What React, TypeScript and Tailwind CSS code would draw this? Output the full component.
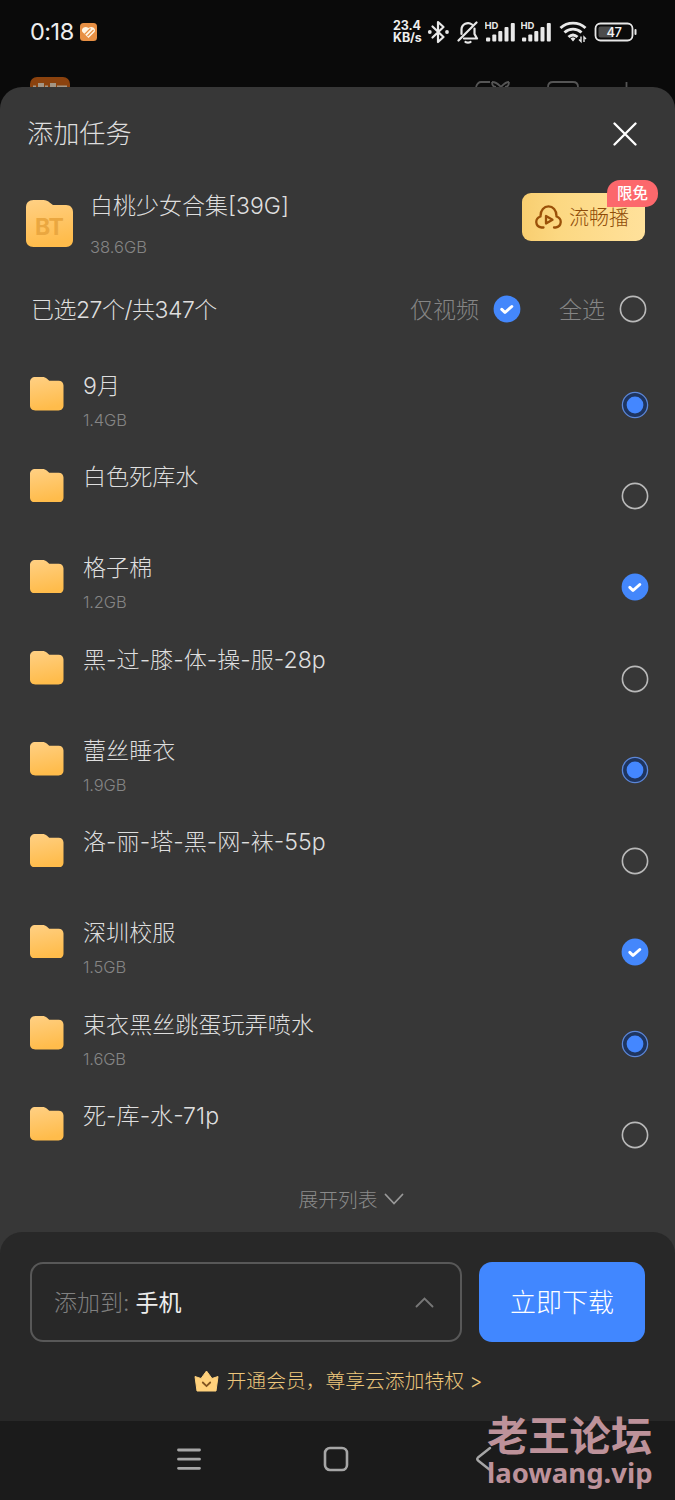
import { useState } from 'react';

type CheckState = 'none' | 'partial' | 'checked';

interface FolderItem {
  name: string;
  size?: string;
  state: CheckState;
}

const folders: FolderItem[] = [
  { name: '9月', size: '1.4GB', state: 'partial' },
  { name: '白色死库水', state: 'none' },
  { name: '格子棉', size: '1.2GB', state: 'checked' },
  { name: '黑-过-膝-体-操-服-28p', state: 'none' },
  { name: '蕾丝睡衣', size: '1.9GB', state: 'partial' },
  { name: '洛-丽-塔-黑-网-袜-55p', state: 'none' },
  { name: '深圳校服', size: '1.5GB', state: 'checked' },
  { name: '束衣黑丝跳蛋玩弄喷水', size: '1.6GB', state: 'partial' },
  { name: '死-库-水-71p', state: 'none' },
];

function CheckCircle({ state }: { state: CheckState }) {
  return (
    <svg className="block shrink-0" width="28" height="28" viewBox="0 0 28 28" fill="none">
      {state === 'none' && <circle cx="14" cy="14" r="12.6" stroke="#b9b9b9" strokeWidth="1.6" />}
      {state === 'partial' && (
        <>
          <circle cx="14" cy="14" r="12.6" fill="#1f355f" stroke="#5b86d8" strokeWidth="1.3" />
          <circle cx="14" cy="14" r="8.4" fill="#4487ff" />
        </>
      )}
      {state === 'checked' && (
        <>
          <circle cx="14" cy="14" r="13.4" fill="#4487fb" />
          <path d="M8.8 14.4l3.200 3.100 6.800-6" stroke="#fff" strokeWidth="3" strokeLinecap="round" strokeLinejoin="round" />
        </>
      )}
    </svg>
  );
}

function FolderIcon({ className }: { className: string }) {
  return (
    <svg className={className} viewBox="0 0 34 34">
      <defs>
        <linearGradient id="folder" x1="0" y1="0" x2="0.2" y2="1">
          <stop offset="0" stopColor="#ffd084" />
          <stop offset="1" stopColor="#ffbc4b" />
        </linearGradient>
      </defs>
      <path
        d="M5.500 0H12.500c2 0 3.400.600 4.800 1.900L19.500 3.700H29c3 0 5 2 5 5V29c0 3-2 5-5 5H5.500C2 34 0 32 0 29V5.500C0 2 2 0 5.500 0z"
        fill="url(#folder)"
      />
    </svg>
  );
}

function SignalIcon() {
  return (
    <svg className="block" width="31" height="22" viewBox="0 0 31 22" fill="#e8e8e8">
      <text x="-0.500" y="8" fontSize="9.500" fontWeight="700" fontFamily="Inter, sans-serif">HD</text>
      <rect x="1" y="16.500" width="4.200" height="4" rx="1" />
      <rect x="7.300" y="13.500" width="4" height="7" rx="1" />
      <rect x="13.300" y="10" width="4" height="10.500" rx="1" />
      <rect x="19.500" y="6" width="4" height="14.500" rx="1" />
      <rect x="25.800" y="2" width="4" height="18.500" rx="1" />
    </svg>
  );
}

function StatusBar() {
  return (
    <div className="flex h-[64px] items-center pl-[30px] pr-[38px] text-[#eee]">
      <span className="w-[50px] whitespace-nowrap text-[23.5px] font-normal leading-none tracking-[-0.5px]">0:18</span>
      <svg width="17" height="18" viewBox="0 0 17 18">
        <rect width="17" height="18" rx="3.500" fill="#e89044" />
        <path d="M8.500 15L2.500 9C.5 6 4.500 2 8.500 5 12.500 2 16.500 6 14.500 9z" fill="#fff4e2" />
        <path d="M4.500 11.500l6-6M7.500 13l6-6" stroke="#e89044" strokeWidth="1.200" />
      </svg>

      <div className="ml-auto flex items-center">
        <div className="w-[34px] whitespace-nowrap text-[12.500px] font-bold leading-[12px] tracking-[-0.1px]">
          <div>23.4</div>
          <div>KB/s</div>
        </div>
        <svg width="23" height="24" viewBox="0 0 23 24" fill="none" stroke="#e8e8e8" strokeWidth="2.200">
          <path d="M5.500 6.500l11 10.500-5.500 5V2l5.500 5L5.500 17.500" strokeLinejoin="round" strokeLinecap="round" />
          <circle cx="2.800" cy="12" r="1.900" fill="#e8e8e8" stroke="none" />
          <circle cx="20" cy="12" r="1.900" fill="#e8e8e8" stroke="none" />
        </svg>
        <svg className="ml-[7px]" width="22" height="24" viewBox="0 0 22 24" fill="none" stroke="#e8e8e8" strokeWidth="2.200" strokeLinecap="round" strokeLinejoin="round">
          <path d="M4.500 14V9.500a6.500 6.500 0 0 1 10.500-5M17.500 8.500V14l2.500 4.500H7M1.500 20.500L19.500 2.500" />
          <path d="M8.500 22c1.500.8 3.500.8 5 0" />
        </svg>
        <div className="ml-[6px] flex gap-[5px]">
          <SignalIcon />
          <SignalIcon />
        </div>
        <svg className="ml-[7px]" width="30" height="24" viewBox="0 0 30 24" fill="none" stroke="#e8e8e8" strokeWidth="2.900">
          <path d="M1.500 8c7-6.500 18-6.500 25 0M5.500 12.500c5-4.500 12-4.500 17 0M9.500 17c3-2.800 6-2.800 9 0" />
          <path d="M11.500 18.500c1-1.500 4-1.500 5 0L14 21.500z" fill="#e8e8e8" stroke="none" />
          <path d="M22 16.500v5l-2-2M25 22v-5l2 2" strokeWidth="1.400" />
        </svg>
        <svg className="ml-[5px]" width="43" height="20" viewBox="0 0 43 20" fill="none">
          <rect x="1.500" y="1.500" width="37" height="17" rx="5" stroke="#e8e8e8" strokeWidth="1.800" />
          <rect x="4.500" y="4.500" width="15" height="11" rx="2" fill="#4c4c4c" />
          <rect x="40.500" y="7" width="2" height="6" rx="1" fill="#e8e8e8" />
          <text x="20" y="14.700" textAnchor="middle" fontSize="13" fontFamily="Inter, sans-serif" fontWeight="500" letterSpacing="-0.500" fill="#f2f2f2">47</text>
        </svg>
      </div>
    </div>
  );
}

// Top of the home screen that shows above the sheet
function BackgroundBar() {
  return (
    <div className="flex h-[23px] items-end justify-between pl-[30px] pr-[44px]">
      <svg width="40" height="10" viewBox="0 0 40 10">
        <path d="M0 10V7a7 7 0 0 1 7-7h26a7 7 0 0 1 7 7v3z" fill="#8b420e" />
        <path d="M8 6h6v4H8zM20 6h6v4h-6zM3 8.500h3V10H3zM15 8.500h3V10h-3zM27 8.500h10V10H27z" fill="#a39584" />
      </svg>
      <svg width="156" height="6" viewBox="0 0 156 6" fill="none" stroke="#555" strokeWidth="1.800">
        <path d="M1 6c1-3 2-5 5-5h9M17 1c5 0 7 3 9 5 2-2 4-5 8-5M17 1c0 3 1 5 4 5M34 1c0 3-1 5-4 5M73 6c0-4 2-5 5-5h20c3 0 5 1 5 5M151.500 1v5" />
      </svg>
    </div>
  );
}

function FolderRow({ item, onToggle }: { item: FolderItem; onToggle: () => void }) {
  return (
    <div className="flex h-[91.25px] items-start pl-[30px] pr-[26px]">
      <FolderIcon className="mt-[17.5px] h-[33.500px] w-[33.500px] shrink-0" />
      <div className="ml-[19.500px] flex-1">
        <div className="mt-[11px] whitespace-nowrap text-[23.1px] leading-[30px] text-[#dedede]">{item.name}</div>
        {item.size && <div className="mt-[9px] text-[16.500px] leading-5 tracking-[-0.15px] text-[#858585]">{item.size}</div>}
      </div>
      <button className="mt-[31px]" onClick={onToggle}>
        <CheckCircle state={item.state} />
      </button>
    </div>
  );
}

export default function App() {
  const [items, setItems] = useState(folders);

  const toggle = (index: number) => {
    setItems(items.map((it, i) => (i === index ? { ...it, state: it.state === 'checked' ? 'none' : 'checked' } : it)));
  };

  return (
    <div className="relative flex h-[1500px] w-[675px] flex-col overflow-hidden bg-[#0a0a0a] font-['Inter','Noto_Sans_CJK_SC',sans-serif] font-light">
      <StatusBar />
      <BackgroundBar />

      <div className="flex h-[1334px] shrink-0 flex-col rounded-t-[22px] bg-[#373737]">
        <div className="flex h-[92px] items-center justify-between pl-[27px] pr-[38px] pt-[2px]">
          <h1 className="pt-px text-[26.200px] leading-9 text-[#dedede]">添加任务</h1>
          <svg width="24" height="24" viewBox="0 0 24 24" stroke="#fff" strokeWidth="2.300" strokeLinecap="round">
            <path d="M1.500 1.500l21 21M22.500 1.500l-21 21" />
          </svg>
        </div>

        <div className="flex h-[96px] items-start pl-[26px] pr-[30px]">
          <div className="relative mt-[21px] h-[47px] w-[47px]">
            <FolderIcon className="h-[47px] w-[47px]" />
            <span className="absolute left-[9px] top-[15px] text-[23px] font-bold leading-6 tracking-[-0.3px] text-[#eaa740]">BT</span>
          </div>
          <div className="ml-[17px] flex-1">
            <div className="mt-[12px] text-[23px] leading-[30px] text-[#dedede]">白桃少女合集[39G]</div>
            <div className="mt-[16px] text-[16.500px] leading-5 text-[#858585]">38.6GB</div>
          </div>
          <button className="relative mt-[14px] flex h-[48px] w-[123px] items-center whitespace-nowrap rounded-[9px] bg-linear-to-r from-[#f8ce70] via-[#fcd882] via-30% to-[#ffe19b] pl-[13px] text-[20px] text-[#8f4c08]">
            <svg width="27" height="24" viewBox="0 0 27 24" fill="none" stroke="#9a5008" strokeWidth="2.300" strokeLinecap="round" strokeLinejoin="round">
              <path d="M8.500 22.500H6.500C0 21.500-.5 13.500 5.500 11.500 5-2 22-2 21.500 11.500c6 2 5.500 10-1 11h-1.500" />
              <path d="M11 11v7.500l6.500-3.750z" />
            </svg>
            <span className="ml-[7px] pt-[2px]">流畅播</span>
            <span className="absolute left-[85px] top-[-13px] flex h-[27px] w-[51px] items-center justify-center rounded-[13px] rounded-bl-none bg-[#fc686c] pt-px text-[15.500px] font-medium text-white">
              限免
            </span>
          </button>
        </div>

        <div className="flex h-[85px] items-start pl-[31px] pr-[28px] pt-[19px]">
          <div className="pt-px text-[23px] leading-[30px] tracking-[-0.500px] text-[#dedede]">已选27个/共347个</div>
          <div className="ml-auto flex items-center text-[23px] leading-[30px] text-[#858585]">
            <span className="pt-px">仅视频</span>
            <span className="ml-[14px]"><CheckCircle state="checked" /></span>
            <span className="ml-[38px] pt-px">全选</span>
            <span className="ml-[14px]"><CheckCircle state="none" /></span>
          </div>
        </div>

        <div className="shrink-0">
          {items.map((item, i) => (
            <FolderRow key={item.name} item={item} onToggle={() => toggle(i)} />
          ))}
        </div>

        <div className="flex h-[51px] shrink-0 items-start justify-center pl-[27px] pt-[4px] text-[19.800px] leading-[30px] text-[#8a8a8a]">
          展开列表
          <svg className="ml-[6px] mt-[8px]" width="20" height="13" viewBox="0 0 20 13" fill="none" stroke="#999" strokeWidth="1.800" strokeLinecap="round">
            <path d="M1.500 1.500L10 10.500l8.500-9" />
          </svg>
        </div>

        <div className="h-[189px] shrink-0 rounded-t-[22px] bg-[#282828] px-[30px] pt-[30px]">
          <div className="flex gap-[17px]">
            <button className="flex h-[80px] w-[432px] items-center rounded-[13px] border-2 border-[#585858] pl-[22px] pr-[26px] text-[23px]">
              <span className="pt-[2px] text-[#808080]">添加到:</span>
              <span className="ml-[6px] pt-[2px] font-normal text-[#eee]">手机</span>
              <svg className="ml-auto" width="19" height="11" viewBox="0 0 19 11" fill="none" stroke="#777" strokeWidth="1.900" strokeLinecap="round">
                <path d="M1.500 9.500l8-8 8 8" />
              </svg>
            </button>
            <button className="h-[80px] flex-1 rounded-[13px] bg-[#4187ff] pt-px text-[26px] text-white">立即下载</button>
          </div>
          <div className="mt-[23px] flex items-center justify-center pl-[1px] text-[19.800px] leading-[30px] text-[#edc77c]">
            <svg className="mr-[8px]" width="25" height="22" viewBox="0 0 25 22" fill="none">
              <path d="M1 6.500l6 2L12.500 1l5.500 7.500 6-2L22 21H3z" fill="#ffd17c" stroke="#ffd17c" strokeLinejoin="round" />
              <path d="M8.800 12.500l3.700 3.600 3.700-3.600" stroke="#805321" strokeWidth="1.800" strokeLinecap="round" />
            </svg>
            <span className="whitespace-nowrap pt-px">开通会员，尊享云添加特权 &gt;</span>
          </div>
        </div>
      </div>

      <div className="flex h-[79px] shrink-0 items-start bg-[#1b1b1b] pl-[177px] pt-[25px]">
        <svg width="24" height="26" viewBox="0 0 24 26" stroke="#a6a6a6" strokeWidth="2.800" strokeLinecap="round">
          <path d="M1.500 4h21M1.500 13.200h21M1.500 22.300h21" />
        </svg>
        <svg className="ml-[122px]" width="26" height="26" viewBox="0 0 26 26" fill="none" stroke="#a6a6a6" strokeWidth="2.600">
          <rect x="2" y="2" width="22" height="22" rx="5" />
        </svg>
        <svg className="ml-[126px]" width="17" height="26" viewBox="0 0 17 26" fill="none" stroke="#a6a6a6" strokeWidth="2.400" strokeLinecap="round" strokeLinejoin="round">
          <path d="M15 2L3 11.500q-1.500 1.500 0 3L15 24" />
        </svg>
      </div>

      <div className="absolute left-[487px] top-[1410px] whitespace-nowrap font-bold text-[#bd929a]">
        <div className="font-['Noto_Sans_CJK_SC',sans-serif] text-[41.300px] leading-[46px]">老王论坛</div>
        <div className="font-['Noto_Sans',sans-serif] text-[27.500px] leading-[34px]">laowang.vip</div>
      </div>
    </div>
  );
}
